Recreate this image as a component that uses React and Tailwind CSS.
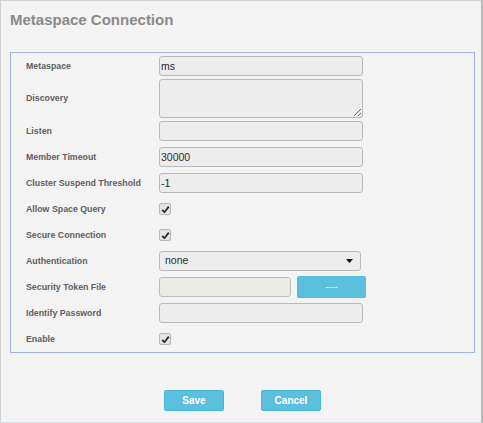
import React from "react";

const font = { fontFamily: '"Liberation Sans", Arial, sans-serif' };

function Check() {
  return (
    <span className="flex h-[12px] w-[12px] items-center justify-center rounded-[2px] border border-[#b8b8b8] bg-[#e4e4e4]">
      <svg width="9" height="9" viewBox="0 0 9 9">
        <path d="M1.2 4.8 L3.4 7.2 L7.8 1.6" fill="none" stroke="#2b2b2b" strokeWidth="1.8" strokeLinejoin="round" />
      </svg>
    </span>
  );
}

function Row({ label, h = "h-[26px]", children }) {
  return (
    <div className={`flex ${h} items-center`}>
      <div className="w-[133px] shrink-0 pt-[1px] text-[8.8px] font-bold text-[#606060]">{label}</div>
      <div className="flex items-center">{children}</div>
    </div>
  );
}

const inputCls =
  "h-[20px] w-[204px] rounded-[3px] border border-[#b9b9b9] bg-[#ededed] px-[1px] text-[10.5px] text-[#2a2a2a] outline-none";

export default function App() {
  return (
    <div
      style={font}
      className="h-[423px] w-[483px] border-t border-l border-[#d0d0d0] border-r-2 border-r-[#b9b9b9] border-b border-b-[#d4e2e2] bg-[#f3f3f3]"
    >
      <div className="h-[51px] pl-[9px] pt-[10px] text-[15px] font-bold leading-[18px] text-[#8a8a8a]">
        Metaspace Connection
      </div>
      <div className="ml-[9px] w-[465px] border border-[#a3b5da] pl-[15px]">
        <Row label="Metaspace">
          <input className={inputCls} defaultValue="ms" readOnly />
        </Row>
        <Row label="Discovery" h="h-[39px]">
          <textarea className="block h-[39px] w-[204px] rounded-[3px] border border-[#b9b9b9] bg-[#ededed] text-[11px] outline-none" readOnly />
        </Row>
        <Row label="Listen">
          <input className={inputCls} defaultValue="" readOnly />
        </Row>
        <Row label="Member Timeout">
          <input className={inputCls} defaultValue="30000" readOnly />
        </Row>
        <Row label="Cluster Suspend Threshold">
          <input className={inputCls} defaultValue="-1" readOnly />
        </Row>
        <Row label="Allow Space Query">
          <Check />
        </Row>
        <Row label="Secure Connection">
          <Check />
        </Row>
        <Row label="Authentication">
          <div className="flex h-[20px] w-[202px] items-center justify-between rounded-[3px] border border-[#b9b9b9] bg-[#ededed] pl-[5px] pr-[7px] text-[10.5px] text-[#2a2a2a]">
            <span>none</span>
            <svg width="7" height="4" viewBox="0 0 7 4">
              <path d="M0 0 H7 L3.5 4 Z" fill="#111" />
            </svg>
          </div>
        </Row>
        <Row label="Security Token File">
          <div className="flex items-center gap-[6px]">
            <div className="h-[20px] w-[132px] rounded-[3px] border border-[#bdbdbd] bg-[#ebebe4]" />
            <button className="flex h-[22px] w-[69px] items-center justify-center rounded-[2px] border border-[#52bde0] bg-[#5bc0de] text-[9px] leading-none text-white">
              ----
            </button>
          </div>
        </Row>
        <Row label="Identify Password">
          <input className={inputCls} defaultValue="" readOnly />
        </Row>
        <Row label="Enable">
          <Check />
        </Row>
      </div>
      <div className="mt-[37px] flex gap-[37px] pl-[163px]">
        <button className="flex h-[21px] w-[60px] items-center justify-center rounded-[2px] border border-[#46b8da] bg-[#5bc0de] text-[10px] font-bold text-white">
          Save
        </button>
        <button className="flex h-[21px] w-[60px] items-center justify-center rounded-[2px] border border-[#46b8da] bg-[#5bc0de] text-[10px] font-bold text-white">
          Cancel
        </button>
      </div>
    </div>
  );
}
